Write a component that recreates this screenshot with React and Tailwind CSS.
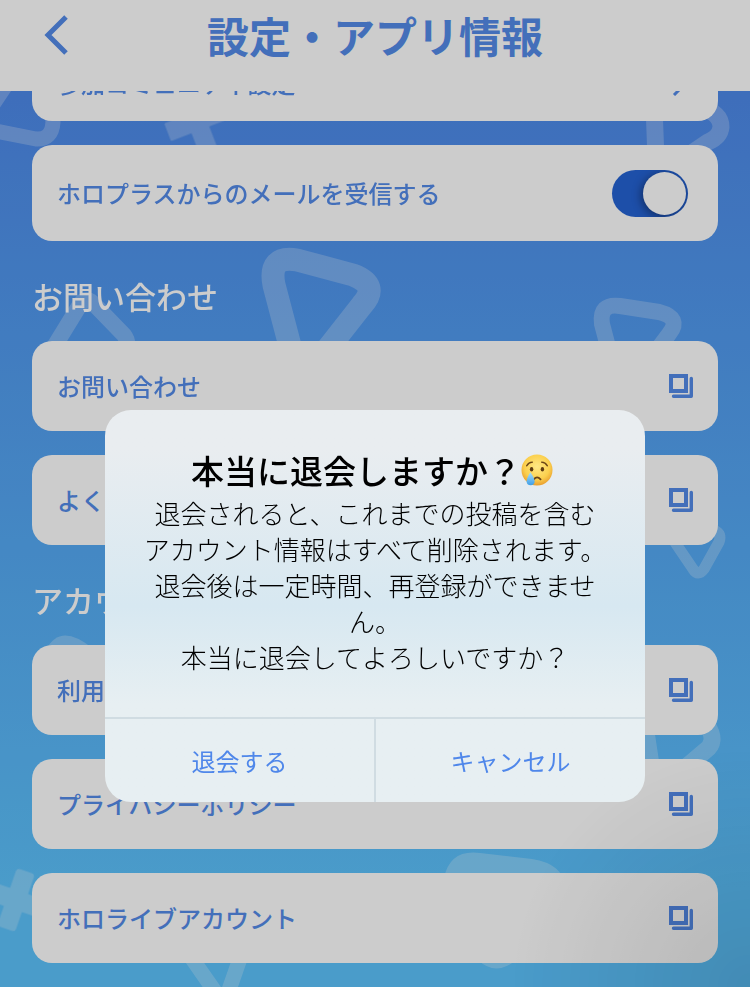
import { useState } from 'react';

const contactLinks = ['お問い合わせ', 'よくある質問'];
const accountLinks = ['利用規約', 'プライバシーポリシー', 'ホロライブアカウント'];

const dialogMessage = [
  '退会されると、これまでの投稿を含む',
  'アカウント情報はすべて削除されます。',
  '退会後は一定時間、再登録ができません。',
  '本当に退会してよろしいですか？'
].join('\n');

function BackgroundShapes() {
  return (
    <svg
      aria-hidden="true"
      viewBox="0 0 750 987"
      preserveAspectRatio="xMidYMin slice"
      className="pointer-events-none absolute inset-0 h-full w-full"
    >
      <g opacity="0.24" fill="none" stroke="#fff" strokeLinejoin="round">
        <path d="M-12 112L12 76" strokeWidth="15" />
        <path d="M-10 130L36 139Q52 140 53 122L50 100" strokeWidth="15" />
        <path d="M654 105L656 160M698 107Q721 112 721 127Q720 137 708 142L680 161" strokeWidth="17" />
        <path d="M300 384L274 285Q268 255 297 260L353 275Q380 285 362 305Z" strokeWidth="23" />
        <path d="M612 362L602 324Q599 303 620 306L659 312Q682 318 669 334L648 362" strokeWidth="16" />
        <path d="M46 360L81 303Q86 297 93 303L124 335Q130 343 124 352" strokeWidth="16" />
        <path d="M672 538L693 569Q698 577 704 569L719 542Q722 534 714 530" strokeWidth="11" />
        <path d="M645 725L651 765M707 725Q718 742 705 751L685 768" strokeWidth="17" />
        <path d="M186 950L216 993Q224 1000 229 990L243 950" strokeWidth="15" />
      </g>
      <g opacity="0.24" fill="#fff">
        <path d="M188 90h18v22h22v18h-22v22h-18v-22h-22v-18h22z" transform="rotate(-21 197 121)" stroke="#fff" strokeLinejoin="round" />
        <path
          d="M10 873h12v21h21v12h-21v21h-12v-21h-21v-12h21z"
          transform="rotate(19 16 900)"
          stroke="#fff"
          strokeWidth="7"
          strokeLinejoin="round"
        />
        <path d="M46 650Q60 622 92 648Z" />
        <path d="M444 878Q450 849 480 853L532 859Q557 863 563 878Z" />
        <path d="M478 960Q496 977 516 960Z" />
      </g>
    </svg>
  );
}

function ExternalIcon() {
  return (
    <svg aria-hidden="true" viewBox="0 0 24 24" className="h-6 w-6 shrink-0" fill="none" stroke="currentColor">
      <rect x="2" y="2" width="15" height="15" strokeWidth="4" />
      <path d="M22.300 4.500V22.300H4.500" strokeWidth="3.400" strokeLinecap="round" strokeLinejoin="round" />
    </svg>
  );
}

function CryingFace() {
  return (
    <svg role="img" aria-label="泣き顔" viewBox="0 0 38 32" className="h-8 w-[38px] shrink-0">
      <defs>
        <radialGradient id="face" cx="0.5" cy="0.4" r="0.62">
          <stop offset="0" stopColor="#ffe886" />
          <stop offset="0.65" stopColor="#fbd04e" />
          <stop offset="1" stopColor="#e79a2c" />
        </radialGradient>
        <linearGradient id="tear" x1="0" y1="0" x2="0" y2="1">
          <stop offset="0" stopColor="#a9defa" />
          <stop offset="1" stopColor="#3f9fe6" />
        </linearGradient>
      </defs>
      <circle cx="16" cy="16" r="15.5" fill="url(#face)" />
      <g fill="none" stroke="#6b4517" strokeWidth="1.3" strokeLinecap="round">
        <path d="M5.6 11.8Q7.6 8.4 11.4 8.2" />
        <path d="M26.4 11.8Q24.4 8.4 20.6 8.2" />
        <path d="M12.8 25.3Q16 21.6 19.6 25.3" strokeWidth="1.8" />
      </g>
      <ellipse cx="10.6" cy="15.2" rx="1.7" ry="2.3" fill="#5d3a12" />
      <ellipse cx="21.4" cy="15.2" rx="1.7" ry="2.3" fill="#5d3a12" />
      <path d="M9.4 18.2Q13.6 24 13.6 27.2A4 4 0 0 1 5.6 27.2Q5.6 24 9.4 18.2Z" fill="url(#tear)" />
    </svg>
  );
}

function LinkCard({ label }) {
  return (
    <a
      href="#"
      className="flex h-[90px] items-center justify-between rounded-[20px] bg-white px-[25px] text-[24px] font-medium text-[#548be9]"
    >
      {label}
      <ExternalIcon />
    </a>
  );
}

function LinkSection({ title, links }) {
  return (
    <section>
      <h2 className="mt-[35px] mb-[25px] text-[31px] leading-10 font-medium text-white">{title}</h2>
      <div className="flex flex-col gap-6">
        {links.map((label) => (
          <LinkCard key={label} label={label} />
        ))}
      </div>
    </section>
  );
}

function MailToggle() {
  const [enabled, setEnabled] = useState(true);

  return (
    <label className="mt-6 flex h-24 cursor-pointer items-center justify-between rounded-[20px] bg-white pr-[30px] pl-[25px] text-[24px] font-medium text-[#548be9]">
      ホロプラスからのメールを受信する
      <input
        type="checkbox"
        role="switch"
        checked={enabled}
        onChange={(event) => setEnabled(event.target.checked)}
        className="h-[47px] w-[76px] shrink-0 appearance-none overflow-hidden rounded-full bg-gray-300 p-[2px] before:block before:h-[43px] before:w-[43px] before:rounded-full before:bg-white before:shadow-[-2px_2px_10px_rgba(0,0,0,0.4)] checked:bg-[#2563d4] checked:before:ml-auto"
      />
    </label>
  );
}

function WithdrawDialog({ onClose }) {
  return (
    <div className="fixed inset-0 z-20 flex items-center justify-center bg-black/20 pt-[225px]">
      <div
        role="alertdialog"
        aria-modal="true"
        aria-labelledby="withdraw-title"
        aria-describedby="withdraw-message"
        className="w-[72%] overflow-hidden rounded-[26px] bg-linear-to-b from-[#e9edf0] from-10% via-[#d7e8f1] via-50% to-[#e7eff2] to-75%"
      >
        <div className="px-8 pt-[39px] pb-[42px] text-center text-black">
          <h2
            id="withdraw-title"
            className="flex items-center justify-center text-[33px] leading-[42px] font-medium"
          >
            本当に退会しますか？
            <CryingFace />
          </h2>
          <p id="withdraw-message" className="mt-1 text-[26px] leading-9 font-light whitespace-pre-line">
            {dialogMessage}
          </p>
        </div>
        <div className="flex border-t-2 border-[#d0dce2] text-[24px] text-[#4f87ea]">
          <button type="button" onClick={onClose} className="h-[83px] flex-1 border-r-2 border-[#d0dce2]">
            退会する
          </button>
          <button type="button" onClick={onClose} className="h-[83px] flex-1">
            キャンセル
          </button>
        </div>
      </div>
    </div>
  );
}

export default function App() {
  const [dialogOpen, setDialogOpen] = useState(true);

  return (
    <div className="relative min-h-screen overflow-hidden bg-linear-to-b from-[#4e8aea] from-10% to-[#5dc3fd] to-90% font-['Noto_Sans_CJK_JP',sans-serif]">
      <BackgroundShapes />

      <header className="relative z-10 grid h-[91px] grid-cols-[80px_1fr_80px] bg-white text-[#548be9]">
        <button type="button" aria-label="戻る" className="flex h-[70px] items-center pl-11">
          <svg aria-hidden="true" viewBox="0 0 24 40" className="h-10 w-6" fill="none" stroke="currentColor">
            <path d="M22 2L4 20L22 38" strokeWidth="5" />
          </svg>
        </button>
        <h1 className="text-center text-[42px] leading-[70px] font-bold">設定・アプリ情報</h1>
      </header>

      <main className="relative -mt-[46px] px-8 pb-6">
        <a
          href="#"
          className="flex h-[76px] items-center justify-between rounded-[20px] bg-white pr-[30px] pl-[25px] text-[24px] font-medium text-[#548be9]"
        >
          参加コミュニティ設定
          <svg aria-hidden="true" viewBox="0 0 16 26" className="h-[26px] w-4" fill="none" stroke="currentColor">
            <path d="M2 1L14 13L2 25" strokeWidth="3" />
          </svg>
        </a>
        <MailToggle />
        <LinkSection title="お問い合わせ" links={contactLinks} />
        <LinkSection title="アカウント" links={accountLinks} />
      </main>

      <div className="pointer-events-none absolute inset-0 bg-[radial-gradient(circle_at_bottom_right,rgba(0,0,0,0.1),transparent_240px)]" />

      {dialogOpen && <WithdrawDialog onClose={() => setDialogOpen(false)} />}
    </div>
  );
}
